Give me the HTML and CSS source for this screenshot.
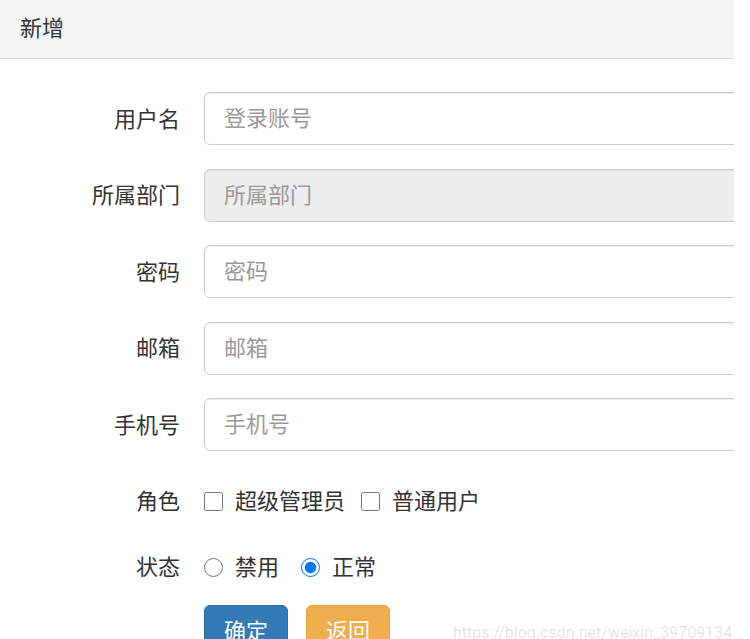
FILE: index.html
```html
<!DOCTYPE html>
<html lang="zh-CN">
<head>
  <meta charset="UTF-8">
  <title>新增</title>
  <link rel="stylesheet" href="styles.css">
</head>
<body>
  <div class="panel">
    <div class="panel-heading">新增</div>
    <form class="panel-body">
      <div class="form-group">
        <label class="control-label" for="username">用户名</label>
        <input class="form-control" id="username" type="text" placeholder="登录账号">
      </div>
      <div class="form-group">
        <label class="control-label" for="dept">所属部门</label>
        <input class="form-control" id="dept" type="text" placeholder="所属部门" disabled>
      </div>
      <div class="form-group">
        <label class="control-label" for="password">密码</label>
        <input class="form-control" id="password" type="password" placeholder="密码">
      </div>
      <div class="form-group">
        <label class="control-label" for="email">邮箱</label>
        <input class="form-control" id="email" type="text" placeholder="邮箱">
      </div>
      <div class="form-group">
        <label class="control-label" for="phone">手机号</label>
        <input class="form-control" id="phone" type="text" placeholder="手机号">
      </div>
      <div class="form-group choice-group roles">
        <span class="control-label">角色</span>
        <div class="choices">
          <label class="choice"><input type="checkbox" name="role"><span>超级管理员</span></label>
          <label class="choice"><input type="checkbox" name="role"><span>普通用户</span></label>
        </div>
      </div>
      <div class="form-group choice-group status">
        <span class="control-label">状态</span>
        <div class="choices">
          <label class="choice radio"><input type="radio" name="status"><span>禁用</span></label>
          <label class="choice radio"><input type="radio" name="status" checked><span>正常</span></label>
        </div>
      </div>
      <div class="form-actions">
        <button type="button" class="btn btn-primary">确定</button>
        <button type="button" class="btn btn-warning">返回</button>
      </div>
    </form>
  </div>
  <div class="watermark">https://blog.csdn.net/weixin_39709134</div>
</body>
</html>
```

FILE: styles.css
```css
body {
  margin: 0;
  background-color: #fff;
  font-family: "Noto Sans CJK SC", "Noto Sans", sans-serif;
  font-size: 22px;
  color: #333;
  height: 639px;
  overflow: hidden;
  position: relative;
}

.panel {
  width: 734px;
  overflow: hidden;
}

.panel-heading {
  height: 58px;
  line-height: 53px;
  padding-left: 20px;
  background-color: #f5f5f5;
  border-bottom: 1px solid #ddd;
}

.panel-body {
  padding-top: 33px;
}

.form-group {
  display: flex;
  align-items: center;
  height: 53px;
  margin-bottom: 23.5px;
}

.control-label {
  width: 180px;
  flex-shrink: 0;
  text-align: right;
  margin-right: 24px;
  padding-bottom: 4px;
}

.form-control {
  box-sizing: border-box;
  width: 600px;
  flex-shrink: 0;
  height: 53px;
  padding: 0 19px 5px;
  border: 1px solid #ccc;
  border-radius: 6px;
  box-shadow: inset 0 1px 1px rgba(0, 0, 0, .075);
  font-family: inherit;
  font-size: 22px;
  color: #555;
  background-color: #fff;
}

.form-control::placeholder {
  color: #999;
}

.form-control:disabled {
  background-color: #eee;
}

.roles {
  margin-bottom: 13px;
}

.status {
  margin-bottom: 11.5px;
}

.choices {
  display: flex;
  align-items: center;
}

.choice {
  display: flex;
  align-items: center;
  margin-right: 16px;
}

.choice span {
  padding-bottom: 4px;
}

.choice.radio {
  margin-right: 22px;
}

.choice input {
  width: 19px;
  height: 19px;
  margin: 0 12px 0 0;
}

.form-actions {
  display: flex;
  padding-left: 204px;
  gap: 18px;
}

.btn {
  box-sizing: border-box;
  width: 84px;
  height: 51px;
  padding: 0 0 4px;
  border: 1px solid transparent;
  border-radius: 6px;
  font-family: inherit;
  font-size: 22px;
  color: #fff;
}

.btn-primary {
  background-color: #337ab7;
  border-color: #2e6da4;
}

.btn-warning {
  background-color: #f0ad4e;
  border-color: #eea236;
}

.watermark {
  position: absolute;
  left: 453px;
  top: 623px;
  font-family: Roboto, sans-serif;
  font-size: 16px;
  color: rgba(0, 0, 0, .12);
  white-space: nowrap;
}
```
